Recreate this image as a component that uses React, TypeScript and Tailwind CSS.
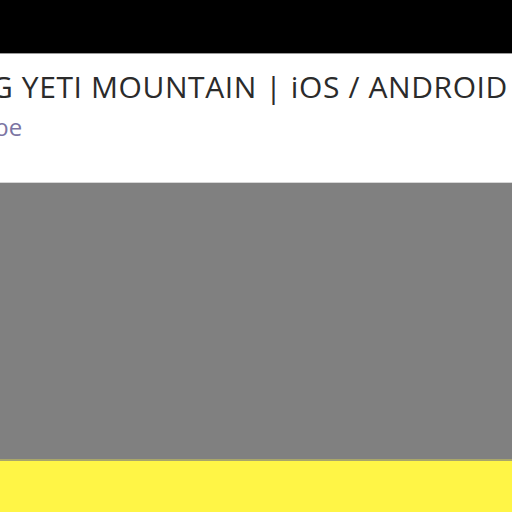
export default function App() {
  return (
    <div className="w-[512px] h-[512px] overflow-hidden flex flex-col bg-[#808080]" style={{ fontFamily: '"Open Sans", sans-serif' }}>
      <div className="h-[53px] bg-black shrink-0" />
      <div className="h-[1px] bg-[#9a9a9a] shrink-0" />
      <div className="h-[128px] bg-white shrink-0 overflow-hidden flex flex-col pt-[13px]">
        <div className="whitespace-nowrap text-[30px] leading-[40px] tracking-[0.6px] text-[#2b2b2b] ml-[-9px]">G YETI MOUNTAIN | iOS / ANDROID</div>
        <div className="whitespace-nowrap text-[24px] leading-[30px] text-[#7b74a3] ml-[-6px] mt-[5px]">be</div>
      </div>
      <div className="h-[1px] bg-[#d6d6d6] shrink-0" />
      <div className="h-[276px] bg-[#808080] shrink-0" />
      <div className="h-[2px] bg-[#a9a66a] shrink-0" />
      <div className="flex-1 bg-[#fff546]" />
    </div>
  );
}
